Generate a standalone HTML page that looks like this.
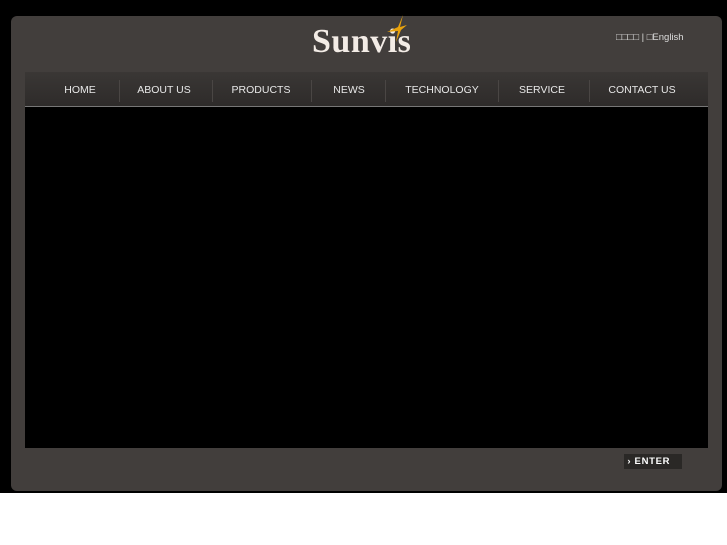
<!DOCTYPE html>
<html><head><meta charset="utf-8"><style>
body{margin:0;width:727px;height:545px;background:#fff;position:relative;overflow:hidden;font-family:"Liberation Sans",sans-serif}
.top{position:absolute;left:0;top:0;width:727px;height:493px;background:#000}
.panel{position:absolute;left:11px;top:16px;width:711px;height:475px;background:#423e3c;border-radius:6px}
.nav{position:absolute;left:25px;top:72px;width:683px;height:34px;background:linear-gradient(#3a3735,#2e2b2a);border-bottom:1px solid #777}
.nav span{position:absolute;top:12px;font-size:10.5px;color:#e8e8e8;transform:translateX(-50%);white-space:nowrap}
.sep{position:absolute;top:8px;width:1px;height:22px;background:#4a4644}
.video{position:absolute;left:25px;top:107px;width:683px;height:341px;background:#000}
.logo{position:absolute;left:312px;top:23px;font-family:"Liberation Serif",serif;font-weight:bold;font-size:34px;letter-spacing:0.5px;color:#f3ece6;white-space:nowrap}
.lang{position:absolute;left:616px;top:32px;font-size:9.5px;color:#ddd;white-space:nowrap}
.enter{position:absolute;left:624px;top:454px;width:58px;height:15px;background:#2a2826;color:#fff;font-size:9.5px;font-weight:bold;line-height:15px;letter-spacing:0.7px}
</style></head><body>
<div class="top"></div>
<div class="panel"></div>
<div class="logo">Sunvis</div>
<svg style="position:absolute;left:383px;top:15px" width="24" height="28" viewBox="0 0 24 28"><path d="M20 0 L15 12 L4 17 L15 16 L13 27 L18 15 L24 10 L17 12 Z" fill="#e8a20c"/></svg>
<div class="lang">□□□□ | □English</div>
<div class="nav">
<span style="left:55px">HOME</span><div class="sep" style="left:94px"></div>
<span style="left:139px">ABOUT US</span><div class="sep" style="left:187px"></div>
<span style="left:236px">PRODUCTS</span><div class="sep" style="left:286px"></div>
<span style="left:324px">NEWS</span><div class="sep" style="left:360px"></div>
<span style="left:417px">TECHNOLOGY</span><div class="sep" style="left:473px"></div>
<span style="left:517px">SERVICE</span><div class="sep" style="left:564px"></div>
<span style="left:617px">CONTACT US</span>
</div>
<div class="video"></div>
<div class="enter">&nbsp;› ENTER</div>
</body></html>
